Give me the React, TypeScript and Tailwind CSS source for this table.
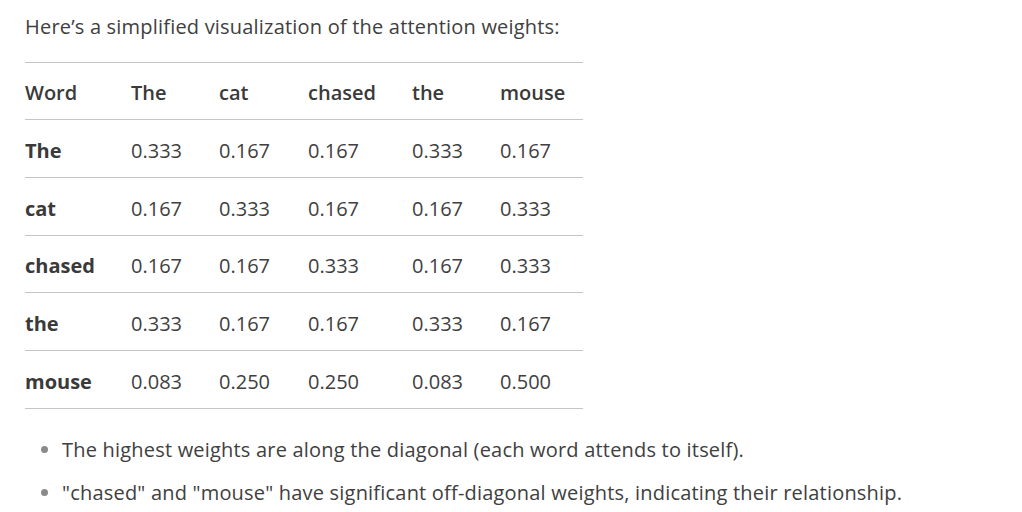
const header = ['Word', 'The', 'cat', 'chased', 'the', 'mouse'];
const rows: [string, string[]][] = [
  ['The', ['0.333', '0.167', '0.167', '0.333', '0.167']],
  ['cat', ['0.167', '0.333', '0.167', '0.167', '0.333']],
  ['chased', ['0.167', '0.167', '0.333', '0.167', '0.333']],
  ['the', ['0.333', '0.167', '0.167', '0.333', '0.167']],
  ['mouse', ['0.083', '0.250', '0.250', '0.083', '0.500']],
];
const widths = ['w-[106px]', 'w-[88px]', 'w-[89px]', 'w-[104px]', 'w-[88px]', 'w-[83px]'];

export default function App() {
  return (
    <div className="min-h-screen bg-white px-[25px] pt-[14px] text-[20px] text-[#404040] font-['Open_Sans',sans-serif]">
      <p className="leading-[26px] tracking-[0.2px]">Here’s a simplified visualization of the attention weights:</p>
      <table className="mt-[22px] w-[558px] table-fixed border-collapse">
        <colgroup>
          {widths.map((w, i) => (
            <col key={i} className={w} />
          ))}
        </colgroup>
        <thead>
          <tr className="h-[57px] border-y border-[#c4c4c4]">
            {header.map((h) => (
              <th key={h} className="p-0 pt-[3px] text-left font-semibold text-[#3a3a3a]">
                {h}
              </th>
            ))}
          </tr>
        </thead>
        <tbody>
          {rows.map(([word, vals]) => (
            <tr key={word} className="h-[57.8px] border-b border-[#c4c4c4]">
              <td className="p-0 pt-[5px] font-bold text-[#3a3a3a]">{word}</td>
              {vals.map((v, i) => (
                <td key={i} className="p-0 pt-[5px]">
                  {v}
                </td>
              ))}
            </tr>
          ))}
        </tbody>
      </table>
      <ul className="mt-[28px] flex flex-col gap-[17px] pl-[37px] list-disc marker:text-[#8a8a8a] tracking-[0.2px]">
        <li className="leading-[26px]">The highest weights are along the diagonal (each word attends to itself).</li>
        <li className="leading-[26px]">"chased" and "mouse" have significant off-diagonal weights, indicating their relationship.</li>
      </ul>
    </div>
  );
}
